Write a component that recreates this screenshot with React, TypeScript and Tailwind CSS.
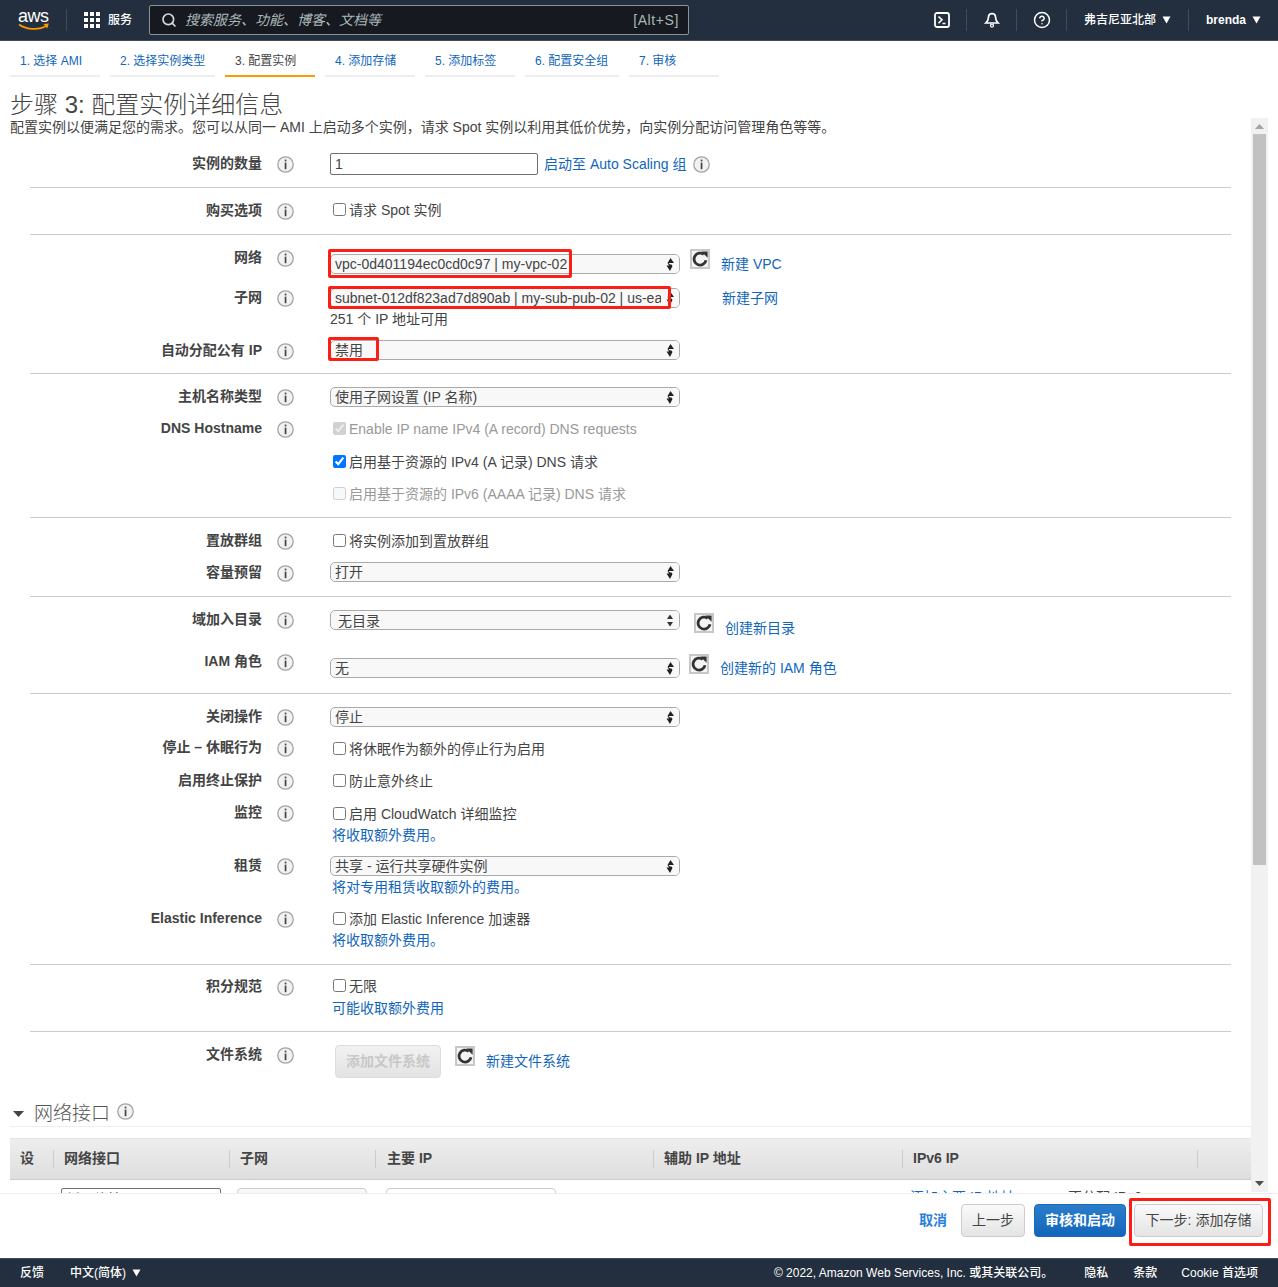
import type { ReactNode } from 'react';
import { CircleHelp, Search } from 'lucide-react';
import clsx from 'clsx';

const steps = [
  { text: '1. 选择 AMI', width: 'w-[90px]' },
  { text: '2. 选择实例类型', width: 'w-[105px]' },
  { text: '3. 配置实例', width: 'w-[90px]', active: true },
  { text: '4. 添加存储', width: 'w-[90px]' },
  { text: '5. 添加标签', width: 'w-[90px]' },
  { text: '6. 配置安全组', width: 'w-[94px]' },
  { text: '7. 审核', width: 'w-[90px]' },
];

function Info({ className }: { className?: string }) {
  return (
    <svg width="17" height="17" viewBox="0 0 17 17" className={clsx('shrink-0', className)}>
      <circle cx="8.5" cy="8.5" r="7.7" fill="#f2f2f2" stroke="#a3a3a3" strokeWidth="1.3" />
      <rect x="7.7" y="3.6" width="1.7" height="1.8" fill="#444" />
      <rect x="7.7" y="6.6" width="1.7" height="6.6" fill="#444" />
    </svg>
  );
}

function Caret({ className }: { className?: string }) {
  return (
    <svg width="9" height="8" viewBox="0 0 9 8" className={className}>
      <path d="M0.5 0.5h8L4.5 7.5z" fill="#fff" />
    </svg>
  );
}

function Refresh({ className }: { className?: string }) {
  return (
    <div className={clsx('w-[20px] h-[20px] border-2 border-[#c8c8c8] bg-[#f4f4f4] flex items-center justify-center shrink-0', className)}>
      <svg width="16" height="16" viewBox="0 0 16 16">
        <path d="M11.8 3.4A6 6 0 1 0 14 9.2" fill="none" stroke="#333" strokeWidth="2.8" />
        <path d="M9.2 0.4h6.4v6.4z" fill="#333" />
      </svg>
    </div>
  );
}

function Row({ label, className, children }: { label: string; className?: string; children?: ReactNode }) {
  return (
    <div className={clsx('flex', className)}>
      <div className="w-[232px] shrink-0 text-right font-bold leading-[20px]">{label}</div>
      <Info className="ml-[15px] mt-[3px]" />
      <div className="ml-[36px] flex-1 min-w-0">{children}</div>
    </div>
  );
}

function Select({ value, className, plain, inset }: { value: string; className?: string; plain?: boolean; inset?: boolean }) {
  return (
    <div className={clsx('relative w-[350px] h-[20px] border border-[#aaa] rounded-[5px] bg-[#f8f8f8] leading-[19px] overflow-hidden whitespace-nowrap', inset ? 'pl-[7px] pt-[1px]' : 'pl-[4px]', className)}>
      {value}
      <div className="absolute right-0 top-0 bottom-0 w-[18px] bg-[#f8f8f8] flex items-center justify-center">
        <svg width="10" height="15" viewBox="0 0 10 15">
          {plain ? (
            <path d="M5 1.500 8 6H2zM5 13.500 2 9H8z" fill="#333" />
          ) : (
            <path d="M5.500 1 9 6H3.500L5 7.500 6.500 7.500 7.500 9 5 14 1.500 8.500H4L2.500 6z" fill="#222" />
          )}
        </svg>
      </div>
    </div>
  );
}

function Check({ label, checked, disabled, className }: { label: string; checked?: boolean; disabled?: boolean; className?: string }) {
  return (
    <label className={clsx('flex items-center h-[20px] pl-[3px]', disabled && 'text-[#999]', className)}>
      <input type="checkbox" readOnly checked={!!checked} disabled={disabled} className="w-[13px] h-[13px] m-0 mr-[3px] -mt-[2px] shrink-0" />
      {label}
    </label>
  );
}

function Link({ children, className }: { children: ReactNode; className?: string }) {
  return <a className={clsx('text-[#1166bb] leading-[20px] whitespace-nowrap', className)}>{children}</a>;
}

function RedBox({ className }: { className: string }) {
  return <div className={clsx('absolute border-[3px] border-[#fa1e14] rounded-[2px] pointer-events-none', className)} />;
}

function Section({ children, className, last }: { children: ReactNode; className?: string; last?: boolean }) {
  return (
    <section className={clsx('ml-[30px] w-[1201px]', !last && 'border-b border-[#ccc]', className)}>{children}</section>
  );
}

function Button({ children, className }: { children: ReactNode; className?: string }) {
  return (
    <button className={clsx('h-[33px] rounded-[4px] border border-[#ccc] bg-gradient-to-b from-[#fafafa] to-[#e4e4e4] text-[#444]', className)}>
      {children}
    </button>
  );
}

export default function App() {
  return (
    <div className="relative h-[1287px] w-full overflow-hidden flex flex-col bg-white text-[14px] text-[#444] font-['Liberation_Sans','Noto_Sans_CJK_SC',sans-serif]">
      {/* top bar */}
      <header className="h-[41px] shrink-0 bg-[#232f3e] border-b border-[#414c59] flex items-center text-white text-[12px]">
        <div className="ml-[18px] w-[32px] h-[24px] relative shrink-0">
          <span className="absolute left-0 -top-[4px] text-[18px] font-normal leading-[24px] tracking-[-0.5px]">aws</span>
          <svg width="32" height="9" viewBox="0 0 32 9" className="absolute left-0 top-[15px]">
            <path d="M1 1.5c8 5.5 20 6 28 1" fill="none" stroke="#f90" strokeWidth="1.8" />
            <path d="M25.5 1 30.8 0.6 29.2 5.6z" fill="#f90" />
          </svg>
        </div>
        <div className="ml-[16px] w-px h-[22px] bg-[#414c59]" />
        <div className="ml-[17px] grid grid-cols-3 gap-[2px] w-[16px] shrink-0">
          {Array.from({ length: 9 }).map((_, i) => (
            <div key={i} className="w-[4px] h-[4px] bg-white" />
          ))}
        </div>
        <span className="ml-[8px] font-medium">服务</span>
        <div className="ml-[17px] w-[540px] h-[30px] bg-[#16191f] border border-[#879596] rounded-[2px] flex items-center pl-[11px] pr-[9px] text-[14px] text-[#aab7b8]">
          <Search size={16} strokeWidth={2.5} className="text-[#d5dbdb]" />
          <span className="ml-[8px] italic flex-1">搜索服务、功能、博客、文档等</span>
          <span className="tracking-[0.6px]">[Alt+S]</span>
        </div>
        <svg width="16" height="16" viewBox="0 0 16 16" className="ml-[245px] shrink-0">
          <rect x="1" y="1" width="14" height="14" rx="2" fill="none" stroke="#fff" strokeWidth="1.8" />
          <path d="M4.5 4.5 8 7.8 4.5 11.2M8.5 11.5h3" fill="none" stroke="#fff" strokeWidth="1.6" />
        </svg>
        <div className="ml-[16px] w-px h-[22px] bg-[#414c59]" />
        <svg width="16" height="16" viewBox="0 0 16 16" className="ml-[17px] shrink-0">
          <path d="M8 1.6c-2.4 0-3.6 1.9-3.6 4.2 0 2.4-1 3.7-2.6 5.2h12.4c-1.6-1.5-2.6-2.8-2.6-5.2C11.6 3.500 10.400 1.600 8 1.600z" fill="none" stroke="#fff" strokeWidth="1.7" />
          <circle cx="8" cy="13.600" r="1.500" fill="none" stroke="#fff" strokeWidth="1.300" />
        </svg>
        <div className="ml-[16px] w-px h-[22px] bg-[#414c59]" />
        <CircleHelp size={18} strokeWidth={2} className="ml-[16px] shrink-0" />
        <div className="ml-[15px] w-px h-[22px] bg-[#414c59]" />
        <span className="ml-[17px] font-medium whitespace-nowrap">弗吉尼亚北部</span>
        <Caret className="ml-[6px]" />
        <div className="ml-[17px] w-px h-[22px] bg-[#414c59]" />
        <span className="ml-[17px] font-bold">brenda</span>
        <Caret className="ml-[6px]" />
      </header>

      {/* wizard steps */}
      <nav className="h-[36px] shrink-0 flex gap-[10px] pl-[10px] text-[12px] leading-[16px]">
        {steps.map((s) => (
          <div
            key={s.text}
            className={clsx(
              'h-[36px] pt-[12px] pl-[10px] border-b-[2px] whitespace-nowrap',
              s.width,
              s.active ? 'border-[#ff9900] text-[#444]' : 'border-[#eee] text-[#1166bb]',
            )}
          >
            {s.text}
          </div>
        ))}
      </nav>

      {/* scrolling body */}
      <div className="h-[1117px] shrink-0 flex border-b border-[#eee]">
        <div className="w-[1251px] shrink-0 overflow-hidden">
          <h1 className="mt-[12px] ml-[10px] h-[28px] text-[24px] leading-[32px] font-light text-[#444]">步骤 3: 配置实例详细信息</h1>
          <p className="ml-[10px] h-[20px] leading-[20px] whitespace-nowrap">
            配置实例以便满足您的需求。您可以从同一 AMI 上启动多个实例，请求 Spot 实例以利用其低价优势，向实例分配访问管理角色等等。
          </p>

          <Section className="pt-[16px] h-[51px]">
            <Row label="实例的数量">
              <div className="flex items-center">
                <div className="w-[208px] h-[22px] border border-[#707070] rounded-[2px] pl-[4px] leading-[20px]">1</div>
                <Link className="ml-[6px]">启动至 Auto Scaling 组</Link>
                <Info className="ml-[7px] mt-[1px]" />
              </div>
            </Row>
          </Section>

          <Section className="pt-[12px] h-[47px]">
            <Row label="购买选项">
              <Check label="请求 Spot 实例" />
            </Row>
          </Section>

          <Section className="pt-[12px] h-[139px]">
            <Row label="网络" className="h-[40px]">
              <div className="flex items-start">
                <div className="relative mt-[7px]">
                  <Select value="vpc-0d401194ec0cd0c97 | my-vpc-02" />
                  <RedBox className="-left-[2px] -top-[5px] w-[244px] h-[29px]" />
                </div>
                <Refresh className="ml-[10px] mt-[2px]" />
                <Link className="ml-[11px] mt-[7px]">新建 VPC</Link>
              </div>
            </Row>
            <Row label="子网" className="h-[53px]">
              <div className="flex items-start">
                <div className="relative mt-[1px]">
                  <Select value="subnet-012df823ad7d890ab | my-sub-pub-02 | us-east-1b" />
                  <RedBox className="-left-[2px] -top-[2px] w-[343px] h-[23px]" />
                </div>
                <Link className="ml-[42px] mt-[1px]">新建子网</Link>
              </div>
              <div className="leading-[20px] mt-[1px]">251 个 IP 地址可用</div>
            </Row>
            <Row label="自动分配公有 IP">
              <div className="relative">
                <Select value="禁用" />
                <RedBox className="-left-[2px] -top-[3px] w-[51px] h-[24px]" />
              </div>
            </Row>
          </Section>

          <Section className="pt-[12px] h-[144px]">
            <Row label="主机名称类型" className="h-[32px]">
              <Select value="使用子网设置 (IP 名称)" className="mt-[1px]" />
            </Row>
            <Row label="DNS Hostname" className="h-[34px]">
              <Check label="Enable IP name IPv4 (A record) DNS requests" checked disabled className="mt-[1px]" />
            </Row>
            <div className="ml-[300px]">
              <Check label="启用基于资源的 IPv4 (A 记录) DNS 请求" checked />
              <Check label="启用基于资源的 IPv6 (AAAA 记录) DNS 请求" disabled className="mt-[12px]" />
            </div>
          </Section>

          <Section className="pt-[12px] h-[79px]">
            <Row label="置放群组" className="h-[32px]">
              <Check label="将实例添加到置放群组" className="mt-[1px]" />
            </Row>
            <Row label="容量预留">
              <Select value="打开" />
            </Row>
          </Section>

          <Section className="pt-[12px] h-[97px]">
            <Row label="域加入目录" className="h-[42px]">
              <div className="flex items-start">
                <Select value="无目录" plain inset className="mt-[1px]" />
                <Refresh className="ml-[14px] mt-[4px]" />
                <Link className="ml-[11px] mt-[9px]">创建新目录</Link>
              </div>
            </Row>
            <Row label="IAM 角色">
              <div className="flex items-start">
                <Select value="无" className="mt-[7px]" />
                <Refresh className="ml-[9px] mt-[3px]" />
                <Link className="ml-[11px] mt-[7px]">创建新的 IAM 角色</Link>
              </div>
            </Row>
          </Section>

          <Section className="pt-[12px] h-[271px]">
            <Row label="关闭操作" className="h-[31px]">
              <Select value="停止" className="mt-[1px]" />
            </Row>
            <Row label="停止 – 休眠行为" className="h-[33px]">
              <Check label="将休眠作为额外的停止行为启用" className="mt-[2px]" />
            </Row>
            <Row label="启用终止保护" className="h-[32px]">
              <Check label="防止意外终止" className="mt-px" />
            </Row>
            <Row label="监控" className="h-[53px]">
              <Check label="启用 CloudWatch 详细监控" className="mt-[2px]" />
              <Link className="block ml-[2px] mt-px">将收取额外费用。</Link>
            </Row>
            <Row label="租赁" className="h-[53px]">
              <Select value="共享 - 运行共享硬件实例" className="mt-px" />
              <Link className="block ml-[2px] mt-px">将对专用租赁收取额外的费用。</Link>
            </Row>
            <Row label="Elastic Inference">
              <Check label="添加 Elastic Inference 加速器" className="mt-px" />
              <Link className="block ml-[2px] mt-px">将收取额外费用。</Link>
            </Row>
          </Section>

          <Section className="pt-[11px] h-[67px]">
            <Row label="积分规范">
              <Check label="无限" />
              <Link className="block ml-[2px] mt-[2px]">可能收取额外费用</Link>
            </Row>
          </Section>

          <Section className="pt-[12px] h-[67px]" last>
            <Row label="文件系统">
              <div className="flex items-start">
                <div className="ml-[5px] mt-px w-[106px] h-[33px] rounded-[4px] border border-[#ddd] bg-gradient-to-b from-[#f2f2f2] to-[#e3e3e3] text-[#c8c8c8] font-bold flex items-center justify-center">
                  添加文件系统
                </div>
                <Refresh className="ml-[14px] mt-[2px]" />
                <Link className="ml-[11px] mt-[7px]">新建文件系统</Link>
              </div>
            </Row>
          </Section>

          <div className="ml-[10px] border-b border-[#eee] h-[28px] flex items-center">
            <svg width="11" height="6" viewBox="0 0 11 6" className="ml-[3px] mt-[3px]">
              <path d="M0 0h11L5.500 6z" fill="#444" />
            </svg>
            <span className="ml-[10px] mt-[2px] text-[19px] font-light text-[#555] leading-[27px]">网络接口</span>
            <Info className="ml-[7px] -mt-[2px]" />
          </div>

          <div className="ml-[10px] mt-[11px] h-[42px] border-y border-b-[#ccc] border-t-[#e4e4e4] bg-gradient-to-b from-[#eeeeee] to-[#dedede] flex items-center font-bold">
            <div className="w-[43px] pl-[10px] -mt-px">设</div>
            <div className="w-[176px] pl-[10px] border-l border-[#ccc] h-[18px] leading-[17px]">网络接口</div>
            <div className="w-[146px] pl-[10px] border-l border-[#ccc] h-[18px] leading-[17px]">子网</div>
            <div className="w-[278px] pl-[11px] border-l border-[#ccc] h-[18px] leading-[17px]">主要 IP</div>
            <div className="w-[249px] pl-[10px] border-l border-[#ccc] h-[18px] leading-[17px]">辅助 IP 地址</div>
            <div className="w-[295px] pl-[10px] border-l border-[#ccc] h-[18px] leading-[17px]">IPv6 IP</div>
            <div className="flex-1 border-l border-[#ccc] h-[18px]" />
          </div>

          <div className="ml-[10px] mt-[8px] flex items-start">
            <div className="ml-[51px] w-[160px] h-[22px] border border-[#707070] rounded-[2px] pl-[4px] leading-[20px]">新网络接口</div>
            <div className="ml-[16px] w-[130px] h-[22px] border border-[#ccc] rounded-[4px] bg-[#f8f8f8]" />
            <div className="ml-[19px] w-[170px] h-[22px] border border-[#ccc] rounded-[4px]" />
            <div className="ml-[354px] w-[110px] leading-[20px] -mt-px text-[#1166bb] whitespace-nowrap">添加主要 IP 地址</div>
            <div className="ml-[48px] w-[100px] leading-[20px] -mt-px text-[#444] whitespace-nowrap">不分配 IPv6</div>
          </div>
        </div>

        {/* scrollbar */}
        <div className="w-[17px] shrink-0 mt-[41px] mb-[1px] bg-[#f1f1f1] flex flex-col items-center">
          <svg width="9" height="5" viewBox="0 0 9 5" className="mt-[6px] shrink-0">
            <path d="M4.500 0 9 5H0z" fill="#a3a3a3" />
          </svg>
          <div className="mt-[5px] w-[13px] h-[731px] bg-[#c1c1c1]" />
          <svg width="9" height="5" viewBox="0 0 9 5" className="mt-auto mb-[6px] shrink-0">
            <path d="M0 0h9L4.500 5z" fill="#505050" />
          </svg>
        </div>
      </div>

      {/* wizard actions */}
      <div className="h-[64px] shrink-0 flex items-start justify-end pt-[10px] pr-[15px] gap-[9px]">
        <a className="mr-[5px] h-[33px] leading-[33px] font-bold text-[#2b7fdb]">取消</a>
        <Button className="w-[64px]">上一步</Button>
        <button className="w-[92px] h-[33px] -mr-px rounded-[4px] border border-[#1a6ab8] bg-gradient-to-b from-[#2b7dcb] to-[#1166bb] text-white font-bold">
          审核和启动
        </button>
        <Button className="w-[129px]">下一步: 添加存储</Button>
      </div>

      {/* footer */}
      <footer className="h-[29px] shrink-0 bg-[#232f3e] border-t border-[#414c59] flex items-center text-white text-[12px] font-medium px-[20px] whitespace-nowrap">
        <span>反馈</span>
        <span className="ml-[26px]">中文(简体)</span>
        <Caret className="ml-[6px]" />
        <span className="ml-auto">© 2022, Amazon Web Services, Inc. 或其关联公司。</span>
        <span className="ml-[31px]">隐私</span>
        <span className="ml-[25px]">条款</span>
        <span className="ml-[24px]">Cookie 首选项</span>
      </footer>

      <RedBox className="left-[1129px] top-[1198px] w-[142px] h-[48px]" />
    </div>
  );
}
